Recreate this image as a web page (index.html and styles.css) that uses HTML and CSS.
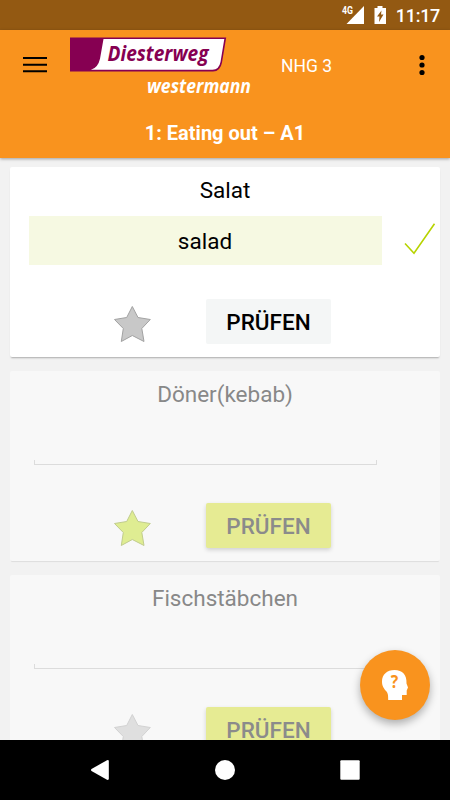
FILE: index.html
```html
<!DOCTYPE html>
<html lang="de">
<head>
    <meta charset="UTF-8">
    <meta name="viewport" content="width=device-width, initial-scale=1.0">
    <title>Diesterweg Vokabeltrainer</title>
    <link rel="stylesheet" href="styles.css">
</head>
<body>
    <div class="statusbar">
        <svg class="status-icons" width="50" height="30" viewBox="0 0 50 30">
            <text class="network" x="3" y="14" textLength="11" lengthAdjust="spacingAndGlyphs">4G</text>
            <path d="M25 6v18H7.500z" fill="#fff"/>
            <path d="M38.500 6h5v2h3.500v16H35.500V8h3z" fill="#fff"/>
            <path d="M42.500 10.500l-4.500 6h2.500l-.5 5.500 4.500-7.500H42z" fill="#935912"/>
        </svg>
        <span class="clock">11:17</span>
    </div>

    <header class="header">
        <div class="toolbar">
            <svg class="menu" width="24" height="18" viewBox="0 0 24 18">
                <path d="M0 2h24M0 8.700h24M0 15.200h24" stroke="#000" stroke-width="2"/>
            </svg>
            <svg class="logo" width="184" height="62" viewBox="0 0 184 62">
                <path d="M0 .5h156.200l-4.200 25q-1.700 9-9 9H0z" fill="#860052"/>
                <path d="M33.500 2h120.800l-3.800 23q-1.500 7.700-8 7.700H21q7-2 9-11z" fill="#fff"/>
                <text class="logo-name" x="37.500" y="24" textLength="101" lengthAdjust="spacingAndGlyphs">Diesterweg</text>
                <text class="logo-sub" x="77" y="55.500" textLength="104" lengthAdjust="spacingAndGlyphs">westermann</text>
            </svg>
            <span class="book">NHG 3</span>
            <svg class="more" width="6" height="22" viewBox="0 0 6 22">
                <circle cx="3" cy="3.500" r="2.600"/>
                <circle cx="3" cy="11" r="2.600"/>
                <circle cx="3" cy="18.500" r="2.600"/>
            </svg>
        </div>
        <h1 class="unit">1: Eating out – A1</h1>
    </header>

    <main class="list">
        <div class="card active">
            <h2 class="word">Salat</h2>
            <div class="answer">
                <div class="result">salad</div>
                <svg class="check" width="32" height="32" viewBox="0 0 32 32">
                    <path d="M1 20.500l9 9.700L30.500.8" fill="none" stroke="#b7d300" stroke-width="1.600"/>
                </svg>
            </div>
            <div class="actions">
                <svg class="star" width="38" height="38" viewBox="0 0 38 38">
                    <path d="M19.300 1.500L25 12.500l12.300 2-8.500 9 2.200 13-11.700-6-11 6 2-13-8.800-9 12.200-2z"/>
                </svg>
                <button class="btn">PRÜFEN</button>
            </div>
        </div>

        <div class="card">
            <h2 class="word">Döner(kebab)</h2>
            <div class="answer">
                <div class="field"></div>
            </div>
            <div class="actions">
                <svg class="star marked" width="38" height="38" viewBox="0 0 38 38">
                    <path d="M19.300 1.500L25 12.500l12.300 2-8.500 9 2.200 13-11.700-6-11 6 2-13-8.800-9 12.200-2z"/>
                </svg>
                <button class="btn">PRÜFEN</button>
            </div>
        </div>

        <div class="card">
            <h2 class="word">Fischstäbchen</h2>
            <div class="answer">
                <div class="field"></div>
            </div>
            <div class="actions">
                <svg class="star" width="38" height="38" viewBox="0 0 38 38">
                    <path d="M19.300 1.500L25 12.500l12.300 2-8.500 9 2.200 13-11.700-6-11 6 2-13-8.800-9 12.200-2z"/>
                </svg>
                <button class="btn">PRÜFEN</button>
            </div>
        </div>

        <button class="help">
            <svg width="26" height="30" viewBox="0 0 26 30">
                <path d="M12.500 0C5 0 0 4.500 0 11.500c0 5 2 7 4.500 10 1.500 2 1.700 4 1.700 8.500H20v-5h4.700v-4.500l1.300-3-1.500-4C25 5 20.500 0 12.500 0z" fill="#fff"/>
                <text class="help-mark" x="8.700" y="18" textLength="7.500" lengthAdjust="spacingAndGlyphs">?</text>
            </svg>
        </button>
    </main>

    <nav class="navbar">
        <svg width="20" height="22" viewBox="0 0 20 22">
            <path d="M1.500 10Q.5 11 1.500 12L17 20.800q1.800.4 1.800-.7V1.900q0-1.100-1.800-.7z" fill="#fff"/>
        </svg>
        <svg width="20" height="22" viewBox="0 0 20 22">
            <circle cx="10" cy="11" r="10" fill="#fff"/>
        </svg>
        <svg width="20" height="22" viewBox="0 0 20 22">
            <rect x=".3" y="1.300" width="19.400" height="19.400" rx="1" fill="#fff"/>
        </svg>
    </nav>
</body>
</html>
```

FILE: styles.css
```css
* {
    margin: 0;
    padding: 0;
    box-sizing: border-box;
}

body {
    font-family: Roboto, "Liberation Sans", sans-serif;
    background-color: #f2f2f2;
    display: flex;
    flex-direction: column;
    height: 800px;
    overflow: hidden;
}

svg {
    display: block;
    flex: none;
}

.statusbar {
    height: 30px;
    flex: none;
    background-color: #935912;
    color: white;
    display: flex;
    justify-content: flex-end;
    align-items: center;
    padding-right: 10px;
    gap: 7px;
}

.network {
    font-size: 10.5px;
    font-weight: bold;
    fill: white;
}

.clock {
    font-size: 18px;
    font-weight: 500;
    letter-spacing: -0.3px;
    line-height: 30px;
    padding-top: 1px;
}

.header {
    height: 128px;
    flex: none;
    background-color: #f9931e;
    color: white;
    box-shadow: 0 1px 3px rgba(0, 0, 0, 0.35);
    z-index: 1;
}

.toolbar {
    height: 70px;
    display: flex;
    align-items: center;
    padding: 0 25px 0 23px;
}

.logo {
    margin: 5px 0 0 23px;
    overflow: visible;
}

.logo-name {
    font-family: "Open Sans", "Noto Sans", sans-serif;
    font-size: 21.5px;
    font-weight: bold;
    font-style: italic;
    fill: #860052;
}

.logo-sub {
    font-family: "Open Sans", "Noto Sans", sans-serif;
    font-size: 19.5px;
    font-weight: bold;
    font-style: italic;
    fill: white;
}

.book {
    font-size: 17.5px;
    margin: 2px auto 0 27px;
}

.unit {
    font-size: 20px;
    line-height: 24px;
    padding-top: 21px;
    text-align: center;
}

.list {
    flex: 1;
    min-height: 0;
    overflow: hidden;
    position: relative;
    padding: 9px 10px 0;
    display: flex;
    flex-direction: column;
    gap: 14px;
}

.card {
    height: 190px;
    flex: none;
    background-color: #f8f8f8;
    border-radius: 2px;
    box-shadow: 0 2px 1px -1px rgba(0, 0, 0, 0.09);
    color: #888;
}

.card.active {
    background-color: white;
    box-shadow: 0 2px 2px -1px rgba(0, 0, 0, 0.3);
    color: black;
}

.word {
    font-size: 22.5px;
    font-weight: normal;
    line-height: 27px;
    padding-top: 10px;
    height: 49px;
    text-align: center;
}

.answer {
    display: flex;
    height: 49px;
    padding-left: 18.500px;
}

.result {
    width: 353px;
    background-color: #f6f9e2;
    font-size: 22.5px;
    line-height: 51px;
    text-align: center;
}

.check {
    margin: 7px 0 0 22px;
}

.field {
    width: 343px;
    height: 5px;
    margin: 40px 0 0 5px;
    border: 1px solid #dcdcdc;
    border-top: none;
}

.actions {
    display: flex;
    align-items: center;
    height: 45px;
    margin-top: 34px;
    padding-left: 103px;
    gap: 55px;
}

.star {
    margin-top: 4px;
    fill: #dfdfdf;
    stroke: #d2d2d2;
}

.active .star {
    fill: #c8c8c8;
    stroke: #a2a2a2;
}

.star.marked {
    fill: #dfed92;
    stroke: #c1cc8d;
}

.btn {
    width: 125px;
    height: 45px;
    border: none;
    border-radius: 2px;
    background-color: #e6eb93;
    color: #8b8b8b;
    font-family: inherit;
    font-size: 22.5px;
    font-weight: 500;
    padding-top: 1px;
    box-shadow: 0 2px 4px rgba(0, 0, 0, 0.16);
}

.active .btn {
    background-color: #f4f6f6;
    color: black;
    box-shadow: none;
}

/* floats above the word cards */
.help {
    position: absolute;
    right: 20px;
    bottom: 20px;
    width: 70px;
    height: 70px;
    border: none;
    border-radius: 50%;
    background-color: #f9931e;
    box-shadow: 0 4px 9px rgba(0, 0, 0, 0.3);
    display: flex;
    justify-content: center;
    align-items: center;
}

.help-mark {
    font-family: "Open Sans", sans-serif;
    font-size: 18px;
    font-weight: bold;
    fill: #f9931e;
}

.navbar {
    height: 60px;
    flex: none;
    background-color: black;
    display: flex;
    justify-content: center;
    align-items: center;
    gap: 105px;
}
```
